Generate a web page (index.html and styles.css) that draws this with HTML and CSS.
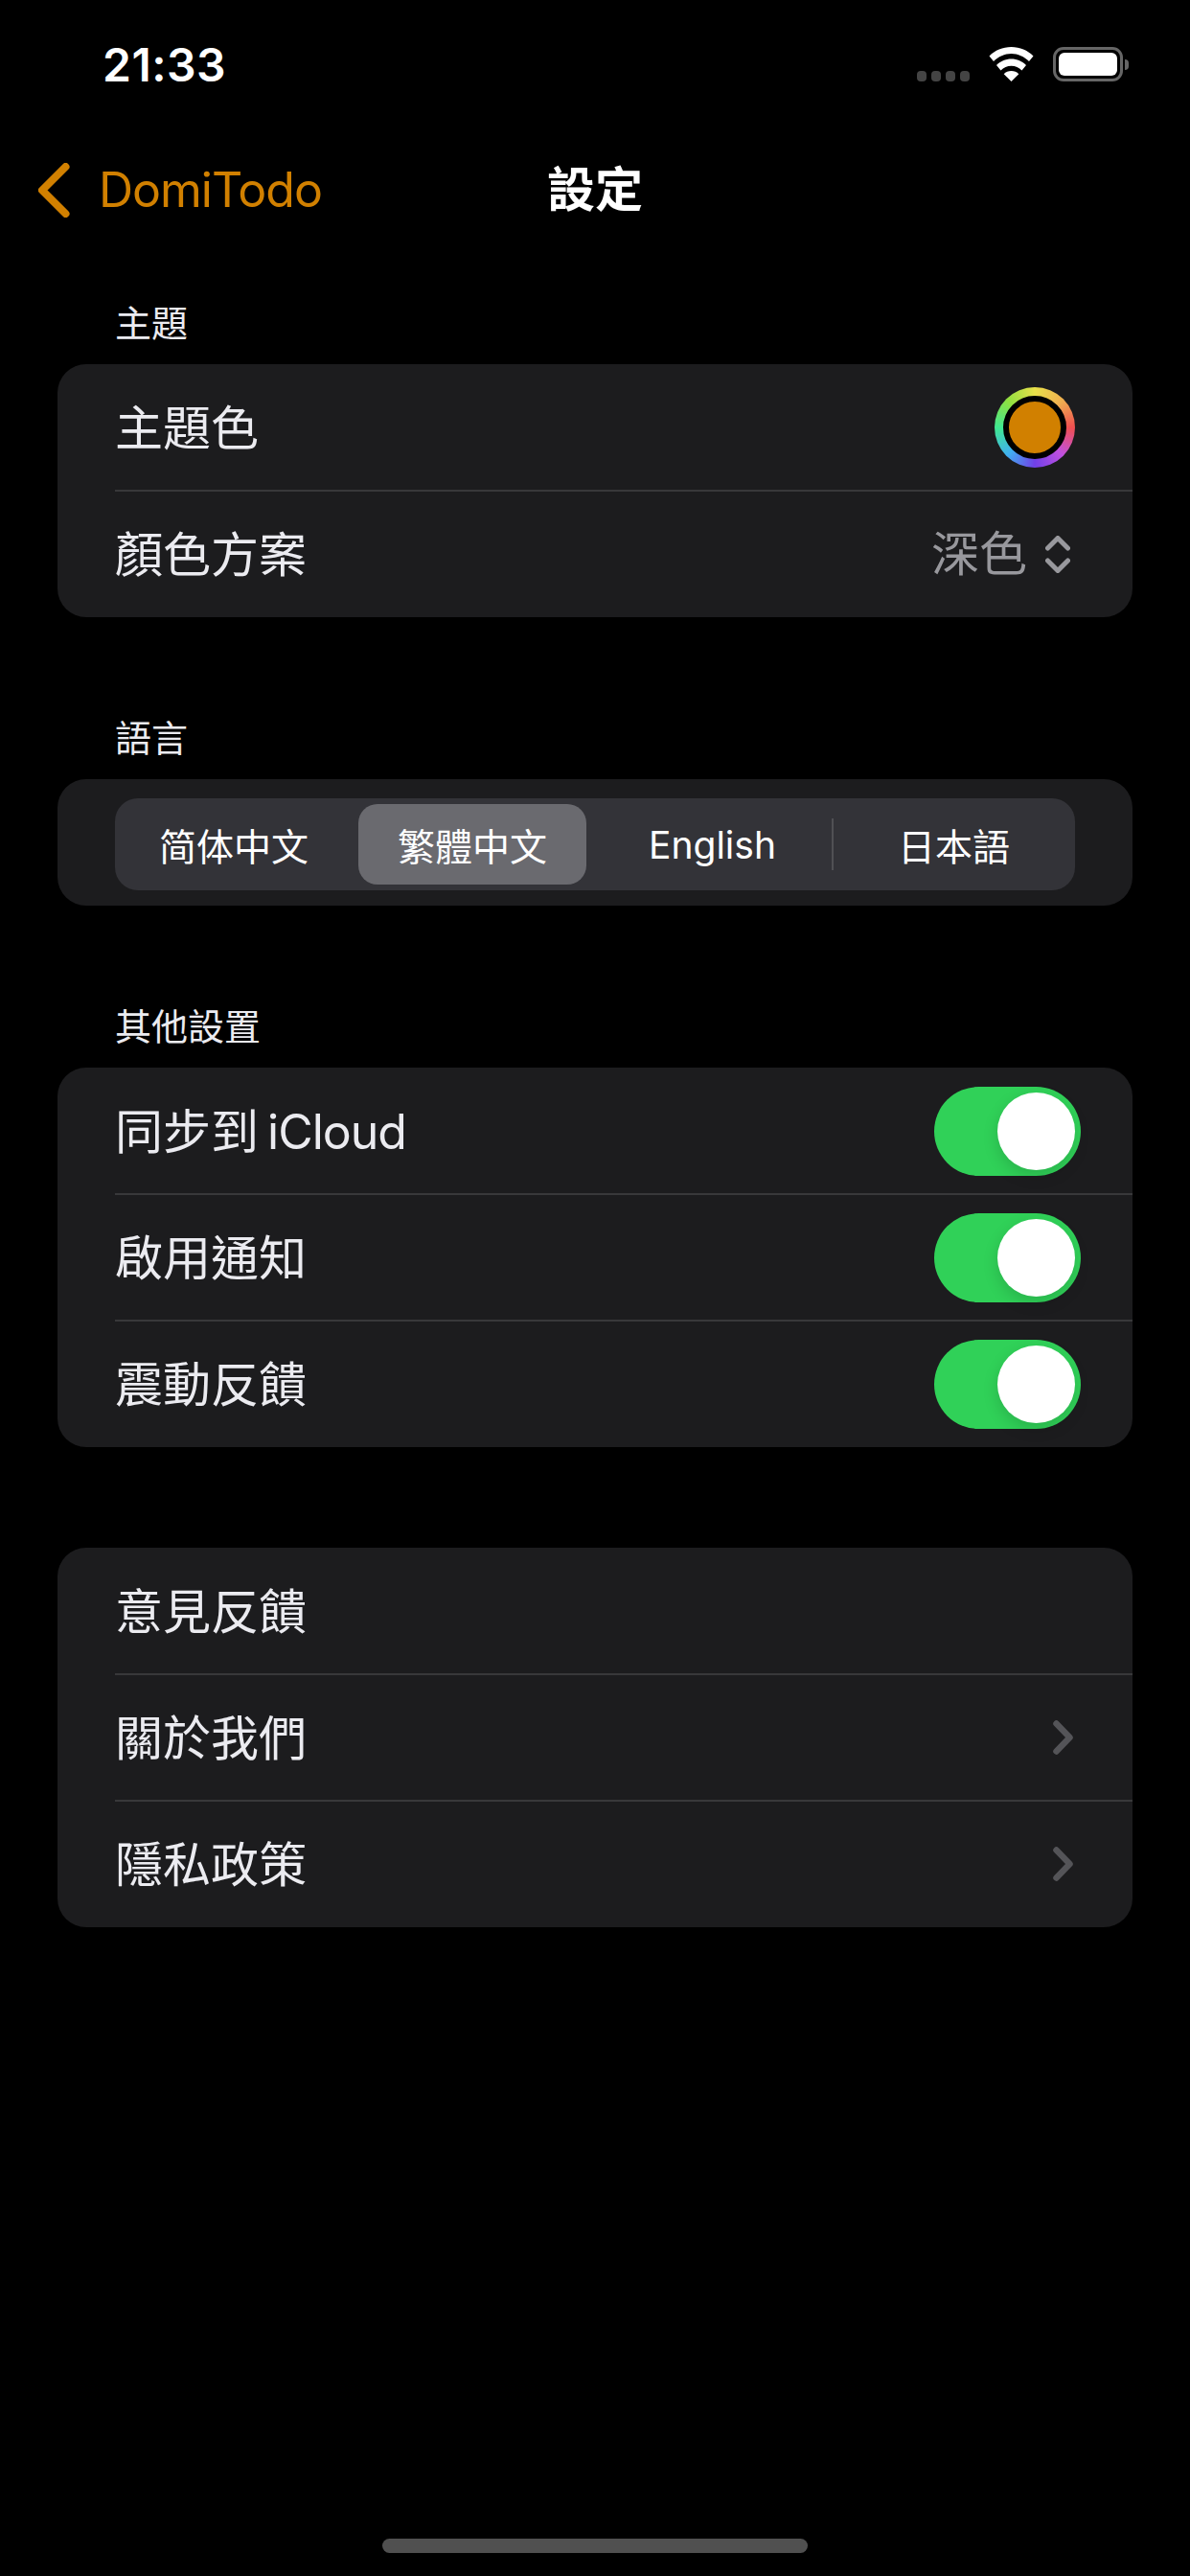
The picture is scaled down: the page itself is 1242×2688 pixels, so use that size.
FILE: index.html
```html
<!DOCTYPE html>
<html lang="zh-Hant">
<head>
<meta charset="utf-8">
<title>設定</title>
<link rel="stylesheet" href="styles.css">
</head>
<body>
<div class="screen">
  <header class="status">
    <span class="time">21:33</span>
    <div class="status-icons">
      <div class="signal"><i></i><i></i><i></i><i></i></div>
      <svg class="wifi" viewBox="0 0 47 36"><path fill="#fff" d="M23.500 0C14.500 0 6.500 3.500 .5 9.500l4.500 5.500C10 10 16.500 7 23.500 7s13.500 3 18.500 8l4.500-5.500C40.500 3.500 32.500 0 23.500 0z"/><path fill="#fff" d="M23.500 12.500c-6 0-11.500 2.500-15.500 6.500l4.500 5.500c3-3 6.800-4.800 11-4.800s8 1.800 11 4.800l4.500-5.500c-4-4-9.500-6.500-15.500-6.500z"/><path fill="#fff" d="M23.500 25c-3 0-5.800 1.200-7.800 3.200l7.800 7.800 7.800-7.800c-2-2-4.800-3.200-7.800-3.200z"/></svg>
      <div class="battery"><div class="battery-body"><div class="battery-fill"></div></div><div class="battery-cap"></div></div>
    </div>
  </header>
  <nav class="nav">
    <div class="back">
      <svg class="back-icon" viewBox="0 0 33 57"><path d="M28.500 4 4 28.500 28.500 53" fill="none" stroke="#d18000" stroke-width="8" stroke-linecap="round" stroke-linejoin="round"/></svg>
      <span class="back-label">DomiTodo</span>
    </div>
    <h1 class="nav-title">設定</h1>
  </nav>
  <main class="content">
    <section class="group first">
      <h2 class="group-title">主題</h2>
      <div class="card">
        <div class="row"><span>主題色</span><div class="swatch"><div class="swatch-core"></div></div></div>
        <div class="row"><span>顏色方案</span>
          <div class="picker"><span class="picker-value">深色</span>
            <svg class="stepper" viewBox="0 0 26 39"><path d="M2.500 13 13 2.500 23.500 13M2.500 26 13 36.500 23.500 26" fill="none" stroke="#98989d" stroke-width="5" stroke-linecap="round" stroke-linejoin="round"/></svg>
          </div>
        </div>
      </div>
    </section>
    <section class="group">
      <h2 class="group-title">語言</h2>
      <div class="card lang-card">
        <div class="segments">
          <div class="segment">简体中文</div>
          <div class="segment selected">繁體中文</div>
          <div class="segment divided">English</div>
          <div class="segment">日本語</div>
        </div>
      </div>
    </section>
    <section class="group">
      <h2 class="group-title">其他設置</h2>
      <div class="card">
        <div class="row"><span>同步到 <span class="latin">iCloud</span></span><div class="toggle"><div class="knob"></div></div></div>
        <div class="row"><span>啟用通知</span><div class="toggle"><div class="knob"></div></div></div>
        <div class="row"><span>震動反饋</span><div class="toggle"><div class="knob"></div></div></div>
      </div>
    </section>
    <section class="group plain">
      <div class="card">
        <div class="row"><span>意見反饋</span></div>
        <div class="row"><span>關於我們</span><svg class="chevron" viewBox="0 0 21 36"><path d="M3.500 3.500 17.500 18 3.500 32.500" fill="none" stroke="#545458" stroke-width="6.500" stroke-linecap="round" stroke-linejoin="round"/></svg></div>
        <div class="row"><span>隱私政策</span><svg class="chevron" viewBox="0 0 21 36"><path d="M3.500 3.500 17.500 18 3.500 32.500" fill="none" stroke="#545458" stroke-width="6.500" stroke-linecap="round" stroke-linejoin="round"/></svg></div>
      </div>
    </section>
  </main>
  <div class="home-indicator"></div>
</div>
</body>
</html>
```
FILE: styles.css
```css
* { box-sizing: border-box; }
html, body { margin: 0; padding: 0; background: #000; }
.screen {
  width: 1242px;
  height: 2688px;
  background: #000;
  color: #fff;
  font-family: Inter, "Noto Sans CJK TC", sans-serif;
  position: relative;
  overflow: hidden;
}
.status {
  height: 148px;
  padding: 38px 64px 0 107px;
  display: flex;
  justify-content: space-between;
  align-items: flex-start;
}
.time { font-size: 48px; line-height: 60px; font-weight: 600; letter-spacing: .5px; }
.status-icons { display: flex; align-items: flex-start; padding-top: 11px; }
.signal { display: flex; gap: 5px; margin: 25px 20px 0 0; }
.signal i { width: 10px; height: 11px; border-radius: 4px; background: #444; }
.wifi { width: 47px; height: 36px; margin-right: 20px; }
.battery { display: flex; align-items: center; height: 36px; }
.battery-body {
  width: 73px;
  height: 36px;
  border: 3px solid #666;
  border-radius: 11px;
  padding: 3px;
}
.battery-fill { width: 100%; height: 100%; background: #fff; border-radius: 6px; }
.battery-cap { width: 4px; height: 11px; margin-left: 2px; background: #666; border-radius: 0 5px 5px 0; }
.nav {
  height: 100px;
  padding-left: 40px;
  display: flex;
  align-items: center;
  position: relative;
}
.back { display: flex; align-items: center; gap: 30px; color: #d18000; }
.back-icon { width: 33px; height: 57px; }
.back-label { font-size: 50px; line-height: 60px; letter-spacing: -1px; }
.nav-title {
  position: absolute;
  left: 0;
  right: 0;
  top: 0;
  margin: 0;
  text-align: center;
  font-size: 50px;
  line-height: 100px;
  font-weight: 700;
}
.content { padding: 0 60px; }
.group { margin-top: 99px; }
.group.first { margin-top: 62px; }
.group.plain { margin-top: 105px; }
.group-title {
  margin: 0 0 0 60px;
  height: 70px;
  font-size: 38px;
  line-height: 54px;
  font-weight: 400;
  color: #ebebf0;
}
.card { background: #1c1c1e; border-radius: 30px; overflow: hidden; }
.row {
  height: 132px;
  padding: 0 60px;
  display: flex;
  align-items: center;
  justify-content: space-between;
  font-size: 50px;
  line-height: 68px;
  position: relative;
  color: #ebebf0;
}
.row > span:first-child { position: relative; top: 1px; }
.row + .row::before {
  content: "";
  position: absolute;
  left: 60px;
  right: 0;
  top: -1px;
  height: 2px;
  background: #38383a;
}
.latin { letter-spacing: -1px; margin-left: -5px; }
.swatch {
  width: 84px;
  height: 84px;
  border-radius: 50%;
  padding: 9px;
  background: conic-gradient(#e8e04a, #f0b050 45deg, #f04f50 90deg, #c050e0 135deg, #7040e8 180deg, #40b0f0 225deg, #40e890 270deg, #90e040 315deg, #e8e04a);
}
.swatch-core {
  width: 66px;
  height: 66px;
  border-radius: 50%;
  background: #d18000;
  border: 6px solid #000;
}
.picker { display: flex; align-items: center; gap: 19px; color: #98989d; margin-right: 5px; }
.stepper { width: 26px; height: 39px; }
.lang-card { padding: 20px 60px 16px; }
.segments {
  height: 96px;
  display: grid;
  grid-template-columns: 248px 250px 251px 253px;
  background: #333338;
  border-radius: 24px;
}
.segment {
  display: flex;
  align-items: center;
  justify-content: center;
  font-size: 39px;
  color: #fff;
  position: relative;
}
.segment.selected { margin: 6px; background: #6a6a6f; border-radius: 20px; }
.segment.divided::after {
  content: "";
  position: absolute;
  right: -1px;
  top: 21px;
  bottom: 21px;
  width: 2px;
  background: #505054;
}
.toggle {
  width: 153px;
  height: 93px;
  border-radius: 47px;
  background: #30d158;
  margin-right: -6px;
  padding: 6px;
  display: flex;
  justify-content: flex-end;
}
.knob {
  width: 81px;
  height: 81px;
  border-radius: 50%;
  background: #fff;
  box-shadow: 0 6px 16px rgba(0,0,0,.15);
}
.chevron { width: 21px; height: 36px; margin-right: 2px; }
.home-indicator {
  position: absolute;
  left: 399px;
  bottom: 24px;
  width: 444px;
  height: 15px;
  border-radius: 8px;
  background: #505050;
}
```
